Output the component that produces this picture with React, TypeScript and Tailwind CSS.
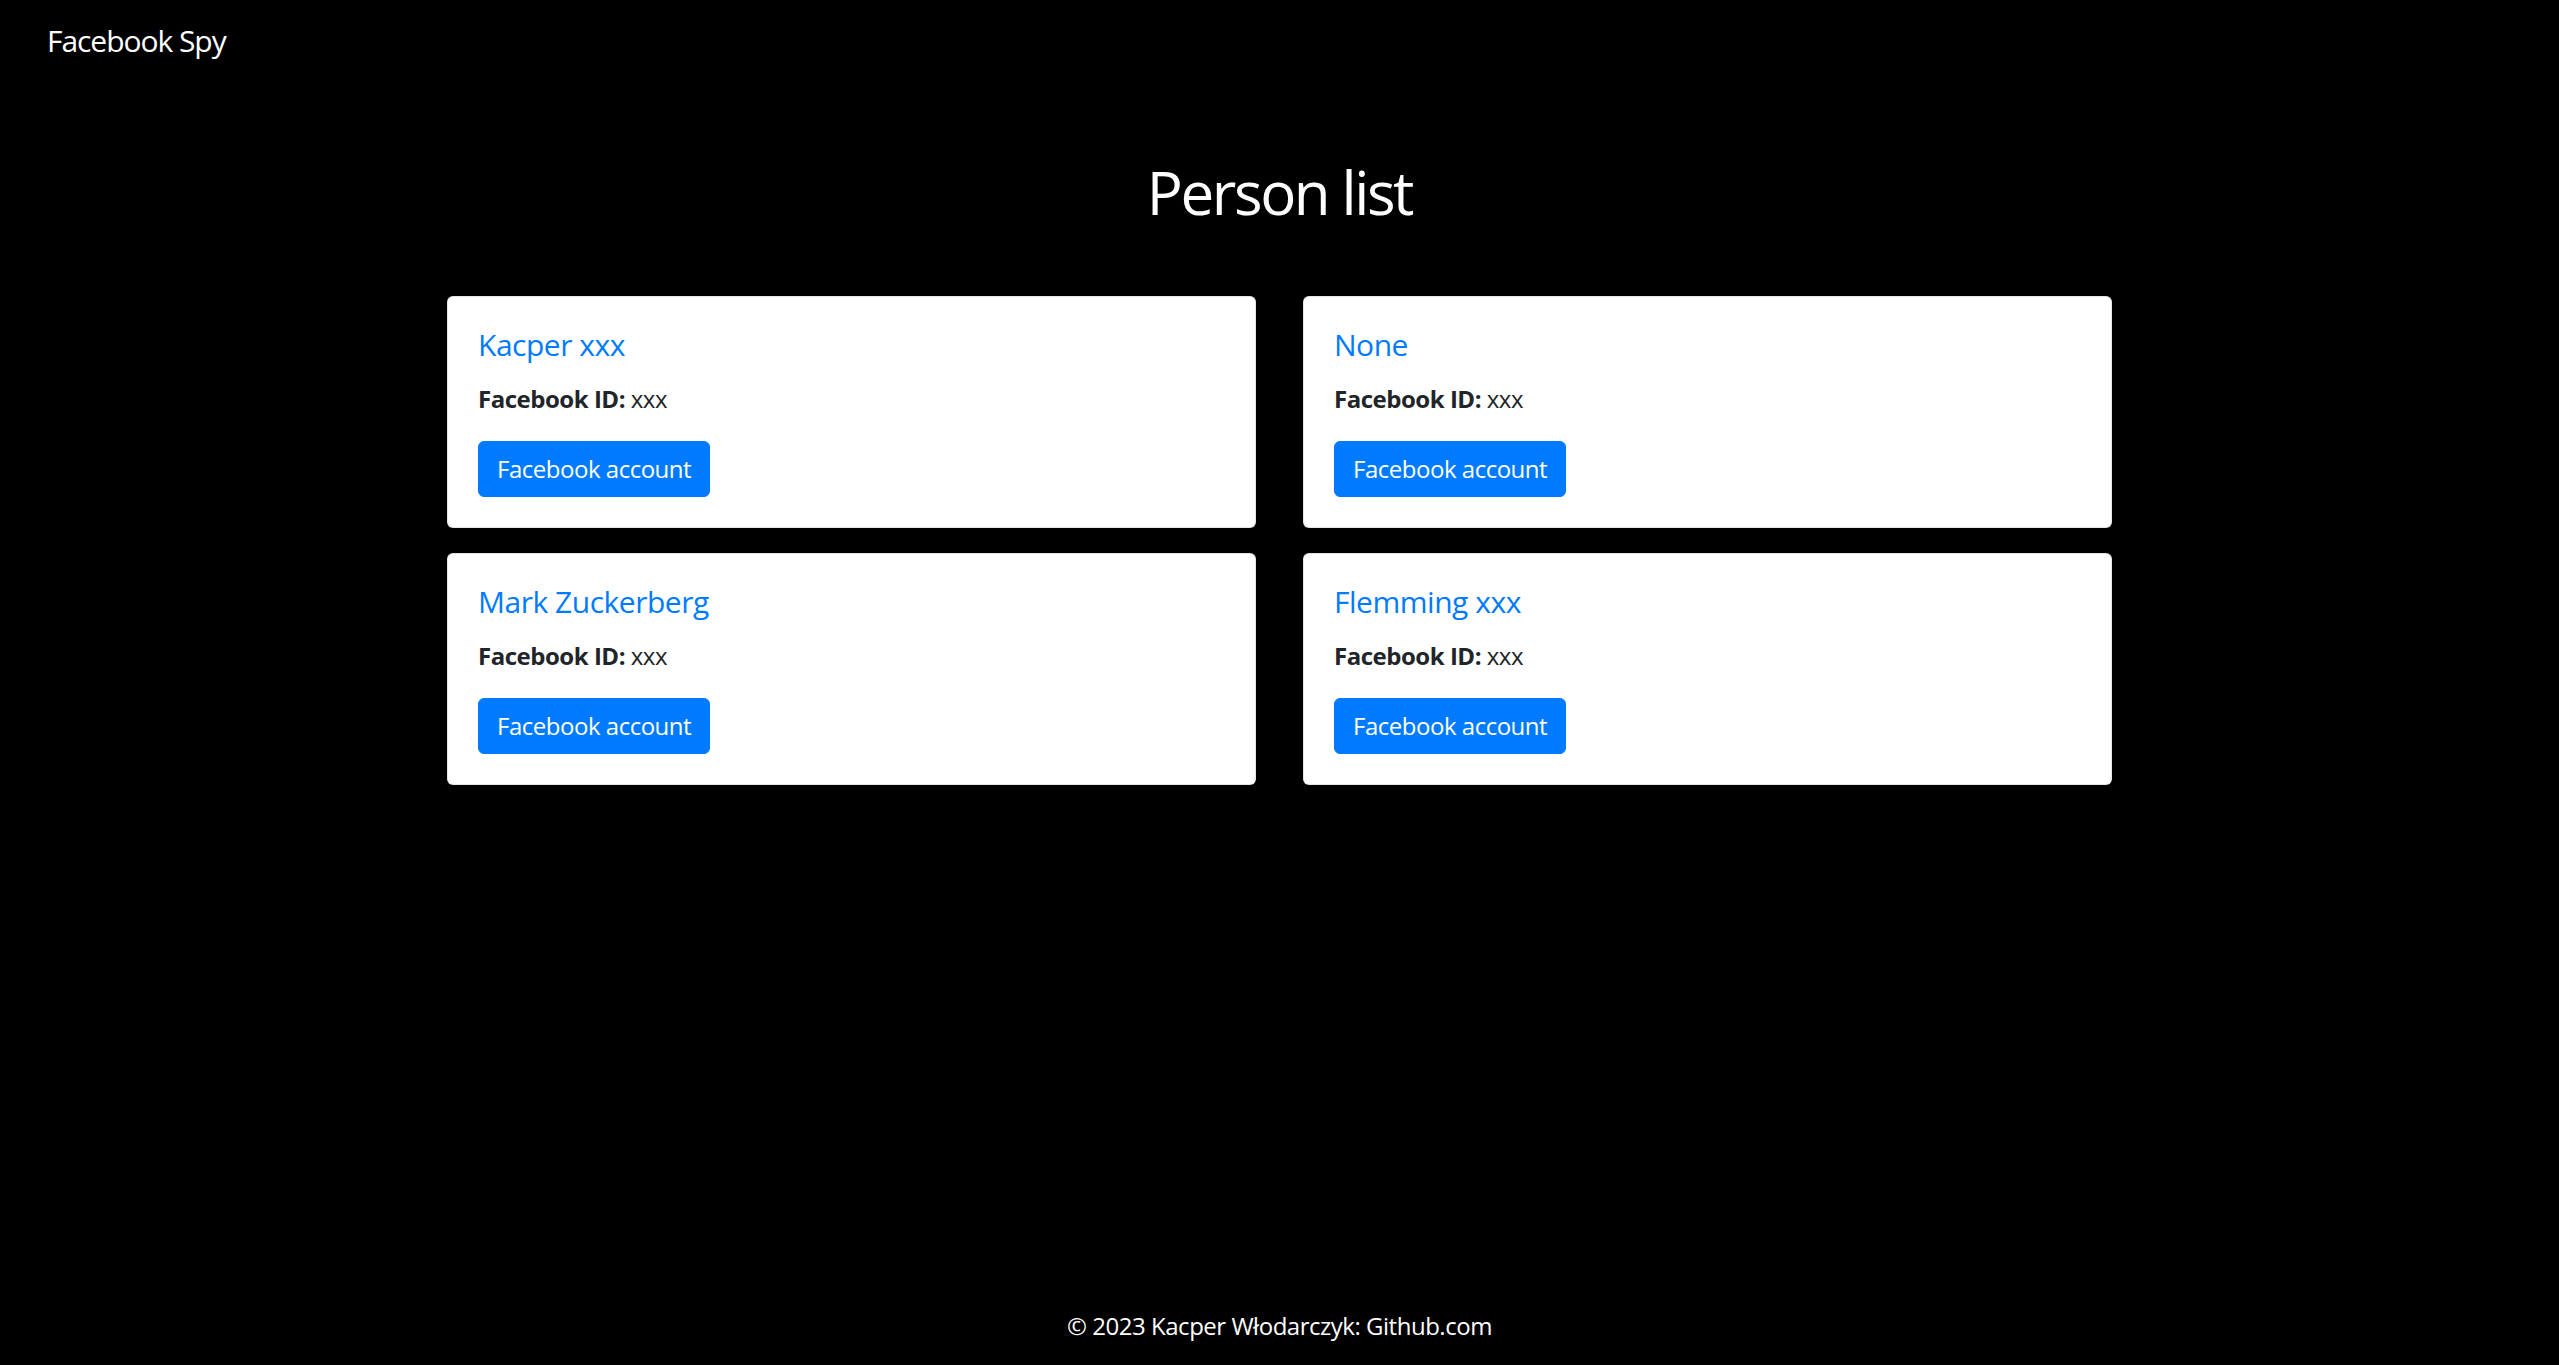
import React from 'react';

type Person = {
  name: string;
  facebookId: string;
};

const people: Person[] = [
  { name: 'Kacper xxx', facebookId: 'xxx' },
  { name: 'None', facebookId: 'xxx' },
  { name: 'Mark Zuckerberg', facebookId: 'xxx' },
  { name: 'Flemming xxx', facebookId: 'xxx' },
];

function PersonCard({ person }: { person: Person }) {
  return (
    <div className="bg-white rounded-[6px] border border-black/10 p-[30px]">
      <h5 className="text-[30px] leading-[36px] text-[#007bff] mb-[18px]">{person.name}</h5>
      <p className="text-[24px] leading-[36px] text-[#212529] mb-[24px]">
        <strong className="font-bold">Facebook ID:</strong> {person.facebookId}
      </p>
      <a
        href="#"
        className="inline-block bg-[#007bff] text-white text-[24px] leading-[36px] px-[18px] py-[9px] rounded-[6px] border border-[#007bff]"
      >
        Facebook account
      </a>
    </div>
  );
}

export default function App() {
  return (
    <div
      className="min-h-screen bg-black text-white flex flex-col tracking-[-0.03em]"
      style={{ fontFamily: '"Open Sans", "Noto Sans", sans-serif' }}
    >
      {/* Navbar */}
      <nav className="h-[80px] flex items-center px-[47px]">
        <a href="#" className="text-[30px] leading-[45px] text-white tracking-[-0.035em]">
          Facebook Spy
        </a>
      </nav>

      <main className="w-[1665px] mx-auto">
        <h1 className="text-[60px] leading-[72px] text-center mt-[76px] mb-[68px] tracking-[-0.04em]">Person list</h1>

        <div className="grid grid-cols-2 gap-x-[47px] gap-y-[25px]">
          {people.map((p) => (
            <PersonCard key={p.name} person={p} />
          ))}
        </div>
      </main>

      {/* Footer */}
      <footer className="mt-auto pb-[21px] text-center text-[24px] leading-[36px] text-white">
        © 2023 Kacper Włodarczyk: Github.com
      </footer>
    </div>
  );
}
